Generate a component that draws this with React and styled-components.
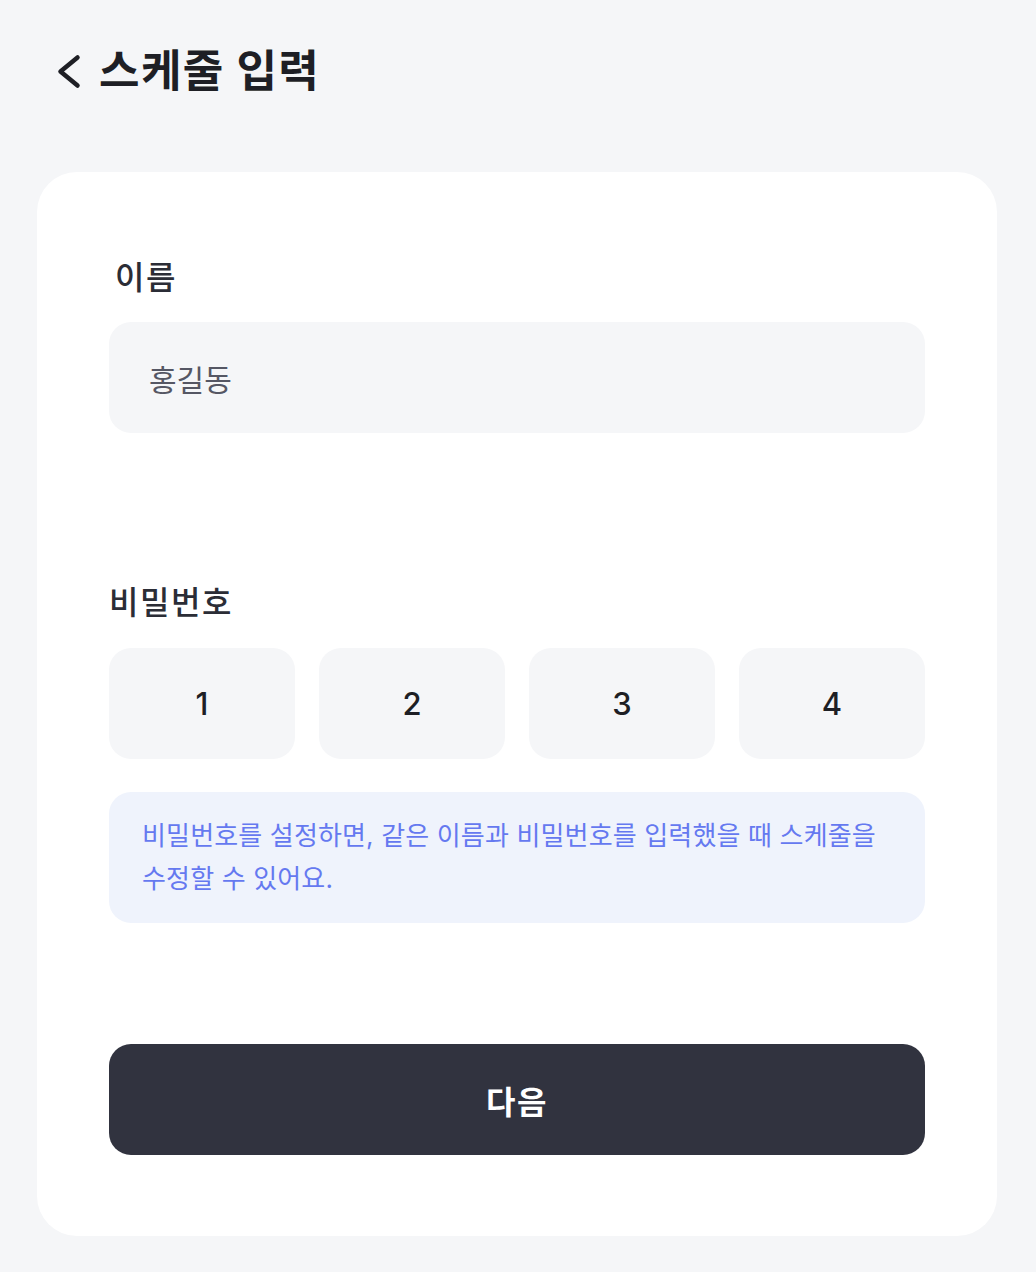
import React, { useState } from 'react';
import styled, { createGlobalStyle } from 'styled-components';

const GlobalStyle = createGlobalStyle`
  html, body {
    margin: 0;
    padding: 0;
    background: #f5f6f8;
  }
  body {
    font-family: Inter, "Noto Sans CJK KR", "Noto Sans", sans-serif;
    color: #1e1f25;
  }
`;

const Page = styled.div`
  width: 960px;
  padding: 0 39px 36px 37px;
`;

const Header = styled.header`
  height: 142px;
  display: flex;
  align-items: center;
  gap: 18px;
  padding-left: 20px;
`;

const BackButton = styled.button`
  display: flex;
  align-items: center;
  justify-content: center;
  width: 24px;
  height: 36px;
  padding: 0;
  border: 0;
  background: none;
  cursor: pointer;
  color: #1e1f25;
`;

const Title = styled.h1`
  margin: 0;
  font-size: 44px;
  font-weight: 700;
  letter-spacing: 1.4px;
  line-height: 52px;
  color: #1e1f25;
`;

const Card = styled.main`
  margin-top: 30px;
  background: #ffffff;
  border-radius: 40px;
  padding: 86px 72px 81px;
  display: flex;
  flex-direction: column;
`;

const Label = styled.label`
  display: block;
  font-size: 32px;
  font-weight: 500;
  line-height: 40px;
  letter-spacing: 1.6px;
  color: #2b2d36;
  margin-left: ${({ $indent }) => $indent || 0}px;
  margin-top: ${({ $top }) => $top || 0}px;
`;

const Field = styled.div`
  margin-top: 24px;
  height: 111px;
  border-radius: 22px;
  background: #f5f6f8;
  display: flex;
  align-items: center;
  padding: 0 40px;
  box-sizing: border-box;
`;

const Input = styled.input`
  width: 100%;
  border: 0;
  outline: none;
  background: transparent;
  font-family: inherit;
  font-size: 30px;
  letter-spacing: 0;
  color: #555764;
  padding: 0;
`;

const PinRow = styled.div`
  margin-top: 25px;
  display: grid;
  grid-template-columns: repeat(4, 1fr);
  gap: 24px;
`;

const PinBox = styled.div`
  height: 111px;
  border-radius: 22px;
  background: #f5f6f8;
  display: flex;
  align-items: center;
  justify-content: center;
  font-family: Inter, sans-serif;
  font-size: 31px;
  font-weight: 500;
  color: #1e1f25;
`;

const Notice = styled.p`
  margin: 33px 0 0;
  padding: 22px 40px 23px 33px;
  border-radius: 22px;
  background: #eff3fc;
  color: #6579f0;
  font-size: 26px;
  line-height: 43px;
  letter-spacing: 0.15px;
`;

const NextButton = styled.button`
  margin-top: 121px;
  height: 111px;
  border: 0;
  border-radius: 22px;
  background: #31333f;
  color: #ffffff;
  font-family: inherit;
  font-size: 32px;
  font-weight: 600;
  letter-spacing: 1.5px;
  cursor: pointer;
`;

const ChevronLeft = () => (
  <svg width="24" height="36" viewBox="0 0 24 36" fill="none">
    <polyline
      points="20.5,4.5 3.5,18.5 20.5,32.5"
      stroke="currentColor"
      strokeWidth="4.5"
      strokeLinecap="round"
      strokeLinejoin="round"
    />
  </svg>
);

const App = () => {
  const [name, setName] = useState('홍길동');
  const pins = ['1', '2', '3', '4'];

  return (
    <>
      <GlobalStyle />
      <Page>
        <Header>
          <BackButton aria-label="뒤로">
            <ChevronLeft />
          </BackButton>
          <Title>스케줄 입력</Title>
        </Header>

        <Card>
          <Label $indent={6}>이름</Label>
          <Field>
            <Input value={name} onChange={(e) => setName(e.target.value)} />
          </Field>

          <Label $top={150}>비밀번호</Label>
          <PinRow>
            {pins.map((p) => (
              <PinBox key={p}>{p}</PinBox>
            ))}
          </PinRow>

          <Notice>
            비밀번호를 설정하면, 같은 이름과 비밀번호를 입력했을 때 스케줄을 수정할 수 있어요.
          </Notice>

          <NextButton>다음</NextButton>
        </Card>
      </Page>
    </>
  );
};

export default App;
